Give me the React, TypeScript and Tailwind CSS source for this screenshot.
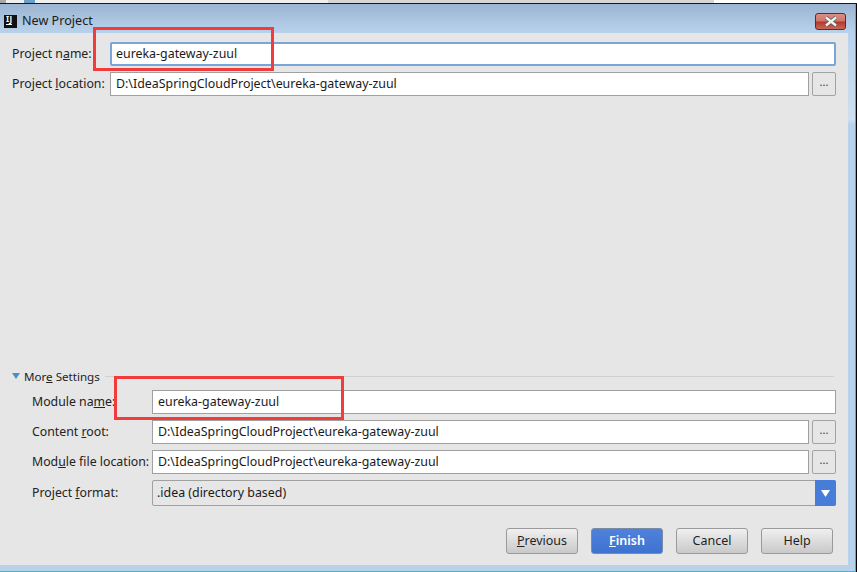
const FONT = "font-['Noto_Sans','Open_Sans',sans-serif]";

function Input({ value, focused, flat }: { value: string; focused?: boolean; flat?: boolean }) {
  const nudge = flat ? '' : 'pt-px';
  return (
    <div
      className={
        focused
          ? `flex h-[24px] flex-1 items-center rounded-[2px] border-2 border-[#7aa5d8] bg-white pl-[4px] text-[12.4px] text-[#1a1a1a] ${nudge}`
          : `flex h-[24px] flex-1 items-center border border-[#a0a0a0] bg-white pl-[5px] text-[12.4px] text-[#1a1a1a] ${nudge}`
      }
    >
      {value}
    </div>
  );
}

function Browse() {
  return (
    <div className="ml-[3px] flex h-[24px] w-[24px] items-center justify-center rounded-[2px] border border-[#a3a3a3] bg-[#e6e6e6] pb-[3px] text-[11px] text-[#333]">
      ...
    </div>
  );
}

function Row({
  label,
  width,
  className,
  children,
}: {
  label: React.ReactNode;
  width: string;
  className?: string;
  children: React.ReactNode;
}) {
  return (
    <div className={`flex items-center ${className ?? ''}`}>
      <div className={`shrink-0 pt-px text-[12.3px] text-[#222] ${width}`}>{label}</div>
      {children}
    </div>
  );
}

function Btn({ children, primary }: { children: React.ReactNode; primary?: boolean }) {
  return (
    <div
      className={
        primary
          ? 'flex h-[26px] w-[72px] items-center justify-center rounded-[3px] border border-[#7d8aa3] bg-gradient-to-b from-[#4f82dc] to-[#3e72d0] text-[12.5px] font-semibold text-white'
          : 'flex h-[26px] w-[72px] items-center justify-center rounded-[3px] border border-[#9a9a9a] bg-gradient-to-b from-[#f0f0f0] to-[#c9c9c9] text-[12.5px] text-[#1f1f1f]'
      }
    >
      {children}
    </div>
  );
}

export default function App() {
  return (
    <div className={`relative flex h-[572px] w-[857px] flex-col overflow-hidden bg-black ${FONT}`}>
      <div className="flex h-[3px] shrink-0">
        <div className="w-[6px] bg-[#a8a8a8]" />
        <div className="flex w-[322px] bg-[#f0f0f0]">
          <div className="ml-[18px] w-[11px] bg-[#6aa0c8]" />
        </div>
        <div className="w-[386px] bg-[#d6d6d6]" />
        <div className="flex-1 bg-white" />
      </div>
      <div className="h-px shrink-0 bg-[#1a1a1a]" />

      <div className="mr-px flex min-h-0 flex-1 flex-col border-r border-b border-[#2cc0dc] bg-[#b9d2ec]">
        <div className="flex h-[29px] shrink-0 items-start bg-gradient-to-b from-[#9bb5d2] to-[#b9d2ec]">
          <div className="mt-[11px] ml-[4px] flex h-[13px] w-[13px] flex-col bg-[#111] pl-[2px] text-[8px] leading-[8px] font-bold tracking-[0.5px] text-white">
            IJ
            <div className="mt-[1px] h-px w-[6px] bg-white" />
          </div>
          <div className="mt-[8px] ml-[5px] text-[12.6px] text-[#1c1c1c]">New Project</div>
          <div className="mt-[9px] mr-[9px] ml-auto flex h-[17px] w-[31px] items-center justify-center rounded-[3px] border border-[#5a2a35] bg-[linear-gradient(#dc8f84_0%,#d0766a_45%,#b23a2c_55%,#c9685a_100%)]">
            <svg width="16" height="11" viewBox="0 0 16 11">
              <path d="M3 1.5 L13 9.5 M13 1.5 L3 9.5" stroke="#5c5c5c" strokeWidth="4" />
              <path d="M3 1.5 L13 9.5 M13 1.5 L3 9.5" stroke="#f2f2f2" strokeWidth="2.4" />
            </svg>
          </div>
        </div>

        <div className="flex min-h-0 flex-1">
          <div className="mb-[6px] flex min-w-0 flex-1 flex-col bg-[#e6e6e6] pt-[9px] pr-[12px]">
            <Row
              className="pl-[12px]"
              width="w-[98px]"
              label={
                <>
                  Project n<u>a</u>me:
                </>
              }
            >
              <Input value="eureka-gateway-zuul" focused />
            </Row>
            <Row
              className="mt-[6px] pl-[12px]"
              width="w-[98px]"
              label={
                <>
                  Project <u>l</u>ocation:
                </>
              }
            >
              <Input value="D:\IdeaSpringCloudProject\eureka-gateway-zuul" />
              <Browse />
            </Row>

            <div className="flex-1" />

            <div className="flex h-[14px] items-center pl-[12px]">
              <svg width="8" height="6" viewBox="0 0 8 6" className="mb-[2px]">
                <path d="M0 0 H8 L4 6 Z" fill="#4a90c8" />
              </svg>
              <div className="ml-[4px] text-[11.6px] text-[#222]">
                Mor<u>e</u> Settings
              </div>
              <div className="mr-[2px] mb-[2px] ml-[5px] h-px flex-1 bg-[#d0d0d0]" />
            </div>
            <Row
              className="mt-[6px] pl-[32px]"
              width="w-[120px]"
              label={
                <>
                  Module na<u>m</u>e:
                </>
              }
            >
              <Input value="eureka-gateway-zuul" flat />
            </Row>
            <Row
              className="mt-[6px] pl-[32px]"
              width="w-[120px]"
              label={
                <>
                  Content <u>r</u>oot:
                </>
              }
            >
              <Input value="D:\IdeaSpringCloudProject\eureka-gateway-zuul" />
              <Browse />
            </Row>
            <Row
              className="mt-[6px] pl-[32px]"
              width="w-[120px]"
              label={
                <>
                  Mod<u>u</u>le file location:
                </>
              }
            >
              <Input value="D:\IdeaSpringCloudProject\eureka-gateway-zuul" />
              <Browse />
            </Row>
            <Row
              className="mt-[6px] pl-[32px]"
              width="w-[120px]"
              label={
                <div className="mb-px">
                  Project <u>f</u>ormat:
                </div>
              }
            >
              <div className="flex h-[26px] flex-1 items-center justify-between rounded-[2px] border border-[#a0a0a0] bg-[#e6e6e6] pl-[4px] text-[12.4px] text-[#1a1a1a]">
                .idea (directory based)
                <div className="-mr-px flex h-[26px] w-[21px] items-center justify-center rounded-r-[2px] bg-[#477cd8]">
                  <svg width="9" height="7" viewBox="0 0 9 7">
                    <path d="M0 0 H9 L4.5 7 Z" fill="#fff" />
                  </svg>
                </div>
              </div>
            </Row>

            <div className="mt-[22px] mb-[11px] flex justify-end pr-[3px]">
              <Btn>
                <span>
                  <u>P</u>revious
                </span>
              </Btn>
              <div className="w-[13px]" />
              <Btn primary>
                <span>
                  <u>F</u>inish
                </span>
              </Btn>
              <div className="w-[13px]" />
              <Btn>Cancel</Btn>
              <div className="w-[13px]" />
              <Btn>Help</Btn>
            </div>
          </div>
          <div className="w-[7px] shrink-0 bg-[linear-gradient(#b9d2ec_0%,#c6dbee_10%,#cfe0f0_16%,#b9d2ec_17%,#b9d2ec_100%)]" />
        </div>
      </div>

      {/* red annotation boxes drawn over the dialog */}
      <div className="absolute top-[27px] left-[93px] h-[44px] w-[181px] border-[3px] border-[#f23c3c]" />
      <div className="absolute top-[376px] left-[114px] h-[44px] w-[230px] border-[3px] border-[#f23c3c]" />
    </div>
  );
}
